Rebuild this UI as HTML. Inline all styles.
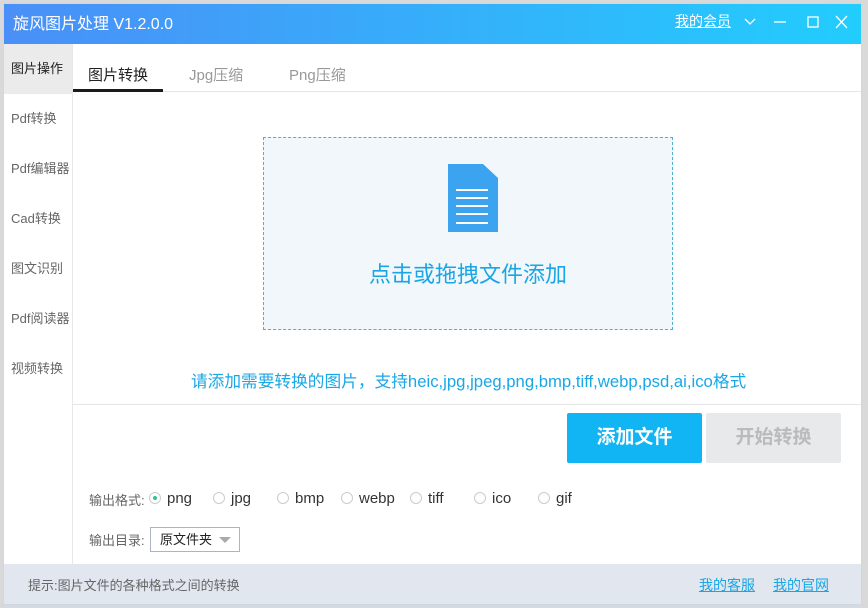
<!DOCTYPE html>
<html><head><meta charset="utf-8"><style>
*{margin:0;padding:0;box-sizing:border-box}
body{width:868px;height:608px;background:#d9d9d9;font-family:"Liberation Sans","Noto Sans CJK SC",sans-serif;position:relative;overflow:hidden}
.win{position:absolute;left:3px;top:3px;width:859px;height:602px;background:#fff;border:1px solid #c9d8ea;overflow:hidden}
.title{position:absolute;left:0;top:0;width:100%;height:40px;background:linear-gradient(90deg,#4a8ff7,#22cdfd);color:#fff}
.title .t{position:absolute;left:9px;top:6px;font-size:16px}
.title .r{position:absolute;left:671px;top:7px;font-size:14px;text-decoration:underline}
.side{position:absolute;left:0;top:40px;width:69px;height:520px;background:#fff;border-right:1px solid #e8e8e8}
.side div{height:50px;line-height:50px;font-size:13px;color:#666;padding-left:7px}
.side .a{background:#ebebeb;color:#222}
.tabs{position:absolute;left:69px;top:40px;right:0;height:48px;border-bottom:1px solid #e6e6e6}
.tab{position:absolute;top:20px;font-size:15px;color:#999}
.drop{position:absolute;left:259px;top:133px;width:410px;height:193px;border:1px dashed #4fb0d0;background:#f2f7fc}
.hint{position:absolute;left:187px;top:364px;font-size:16.7px;color:#19a7e6;white-space:nowrap}
.sep{position:absolute;left:69px;top:400px;right:0;border-top:1px solid #e6e6e6}
.btn{position:absolute;top:409px;width:135px;height:50px;font-size:19px;font-weight:bold;text-align:center;line-height:50px;border-radius:2px}
.fmt{position:absolute;top:486px;font-size:15px;color:#333}
.rad{display:inline-block;width:12px;height:12px;border:1px solid #ccc;border-radius:50%;vertical-align:-1px;margin-right:6px;position:relative}
.foot{position:absolute;left:0;top:560px;width:100%;height:42px;background:#e1e6ef;font-size:13px}
</style></head><body>
<div class="win">
<div class="title"><span class="t">旋风图片处理 V1.2.0.0</span><span class="r">我的会员</span>
<svg style="position:absolute;left:738px;top:10px" width="110" height="16" fill="none" stroke="#fff" stroke-width="1.3"><path d="M3 5l5 5 5-5"/><path d="M32 8h12"/><rect x="66" y="3" width="10" height="10"/><path d="M94 2l11 12M105 2L94 14"/></svg></div>
<div class="side"><div class="a">图片操作</div><div>Pdf转换</div><div>Pdf编辑器</div><div>Cad转换</div><div>图文识别</div><div>Pdf阅读器</div><div>视频转换</div></div>
<div class="tabs"><span class="tab" style="left:15px;color:#222">图片转换</span><span class="tab" style="left:116px">Jpg压缩</span><span class="tab" style="left:216px">Png压缩</span>
<div style="position:absolute;left:0;top:45px;width:90px;height:3px;background:#1a1a1a"></div></div>
<div class="drop">
<svg style="position:absolute;left:182px;top:24px" width="54" height="72"><path d="M2 2h35l15 14v54H2z" fill="#3ba3ef"/><g stroke="#fff" stroke-width="2"><path d="M10 28h32M10 36h32M10 44h32M10 52h32M10 61h32"/></g></svg>
<div style="position:absolute;left:0;width:100%;top:119px;text-align:center;font-size:22px;color:#1aa6e5">点击或拖拽文件添加</div></div>
<div class="hint">请添加需要转换的图片，支持heic,jpg,jpeg,png,bmp,tiff,webp,psd,ai,ico格式</div>
<div class="sep"></div>
<div class="btn" style="left:563px;background:#12b5f3;color:#fff">添加文件</div>
<div class="btn" style="left:702px;background:#e8e9eb;color:#bbb">开始转换</div>
<div class="fmt" style="left:85px;font-size:13px;color:#666;top:486px">输出格式:</div>
<div class="fmt" style="left:145px"><span class="rad"><span style="position:absolute;left:3px;top:3px;width:4px;height:4px;background:#2cc59d;border-radius:50%"></span></span>png</div>
<div class="fmt" style="left:209px"><span class="rad"></span>jpg</div>
<div class="fmt" style="left:273px"><span class="rad"></span>bmp</div>
<div class="fmt" style="left:337px"><span class="rad"></span>webp</div>
<div class="fmt" style="left:406px"><span class="rad"></span>tiff</div>
<div class="fmt" style="left:470px"><span class="rad"></span>ico</div>
<div class="fmt" style="left:534px"><span class="rad"></span>gif</div>
<div class="fmt" style="left:85px;top:526px;font-size:13px;color:#666">输出目录:</div>
<div style="position:absolute;left:146px;top:523px;width:90px;height:25px;border:1px solid #aab4c4;font-size:13px;line-height:23px;padding-left:9px;color:#222">原文件夹<span style="position:absolute;right:8px;top:9px;border:6px solid transparent;border-top:6px solid #aaa;border-bottom:0"></span></div>
<div class="foot"><span style="position:absolute;left:24px;top:11px;color:#666">提示:图片文件的各种格式之间的转换</span>
<span style="position:absolute;left:695px;top:11px;color:#1aa6e5;text-decoration:underline;font-size:14px">我的客服</span>
<span style="position:absolute;left:769px;top:11px;color:#1aa6e5;text-decoration:underline;font-size:14px">我的官网</span></div>
</div>
</body></html>
